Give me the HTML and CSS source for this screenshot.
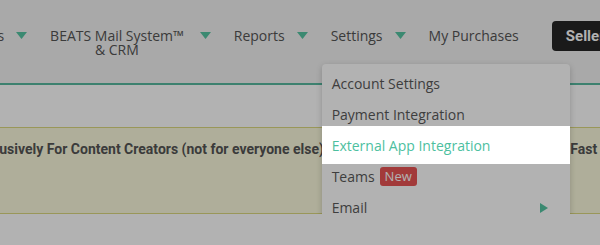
FILE: index.html
```html
<!DOCTYPE html>
<html lang="en">
<head>
<meta charset="UTF-8">
<meta name="viewport" content="width=device-width, initial-scale=1.0">
<title>Settings Tour</title>
<link rel="stylesheet" href="styles.css">
</head>
<body>
<header class="site-header">
<nav class="main-nav">
<div class="nav-item">
<span class="nav-label">Products</span>
<svg class="caret" width="11" height="7" viewBox="0 0 11 7"><path d="M0 0H11L5.5 7Z" fill="currentColor"/></svg>
</div>
<div class="nav-item">
<span class="nav-label nav-label--wrap">BEATS Mail System™<br>&amp; CRM</span>
<svg class="caret" width="11" height="7" viewBox="0 0 11 7"><path d="M0 0H11L5.5 7Z" fill="currentColor"/></svg>
</div>
<div class="nav-item">
<span class="nav-label">Reports</span>
<svg class="caret" width="11" height="7" viewBox="0 0 11 7"><path d="M0 0H11L5.5 7Z" fill="currentColor"/></svg>
</div>
<div class="nav-item nav-item--open">
<span class="nav-label">Settings</span>
<svg class="caret" width="11" height="7" viewBox="0 0 11 7"><path d="M0 0H11L5.5 7Z" fill="currentColor"/></svg>
<ul class="dropdown">
<li class="dropdown-item">Account Settings</li>
<li class="dropdown-item">Payment Integration</li>
<li class="dropdown-item dropdown-item--tour">External App Integration</li>
<li class="dropdown-item">Teams <span class="badge">New</span></li>
<li class="dropdown-item dropdown-item--sub">Email
<svg class="sub-arrow" width="8" height="10" viewBox="0 0 8 10"><path d="M0 0L8 5L0 10Z" fill="currentColor"/></svg>
</li>
</ul>
</div>
<div class="nav-item nav-item--last">
<span class="nav-label">My Purchases</span>
</div>
<button class="seller-btn">Seller Mode</button>
</nav>
</header>

<section class="notice">
<p class="notice-text">Built Exclusively For Content Creators (not for everyone else) And Built for producers who sell beats Fast &amp; Easy</p>
</section>

<div class="tour-overlay"></div>
</body>
</html>
```

FILE: styles.css
```css
body {
    margin: 0;
    background-color: #ffffff;
    font-family: "Open Sans", "Liberation Sans", sans-serif;
    overflow: hidden;
}

.site-header {
    background-color: #f2f2f2;
    height: 83px;
    border-bottom: 2px solid #58b9a0;
}

.main-nav {
    display: flex;
    align-items: flex-start;
    padding-top: 21px;
    margin-left: -54px;
    white-space: nowrap;
}

.nav-item {
    display: flex;
    align-items: flex-start;
    gap: 12px;
    padding-top: 8px;
    margin-right: 23px;
    color: #555555;
    font-size: 14px;
    line-height: 14px;
    position: relative;
}

.nav-label--wrap {
    text-align: center;
    margin-right: 4px;
}

.caret {
    color: #55c4a2;
    margin-top: 3px;
    flex-shrink: 0;
}

.nav-item--last {
    margin-right: 33px;
}

.seller-btn {
    background-color: #262626;
    color: #ffffff;
    border: none;
    border-radius: 4px;
    height: 30px;
    padding: 0 14px;
    font-family: Roboto, "Liberation Sans", sans-serif;
    font-weight: bold;
    font-size: 15px;
    white-space: nowrap;
}

/* dropdown */
.dropdown {
    position: absolute;
    top: 43px;
    left: -9px;
    width: 248px;
    margin: 0;
    padding: 4px 0;
    list-style: none;
    background-color: #ffffff;
    border-radius: 4px;
    box-shadow: 0 2px 6px rgba(0, 0, 0, 0.2);
}

.dropdown-item {
    display: flex;
    align-items: center;
    gap: 5px;
    height: 31px;
    padding: 0 10px;
    color: #5a5a5a;
    font-size: 14px;
}

.dropdown-item--tour {
    position: relative;
    z-index: 11;
    color: #4dbf9f;
}

.dropdown-item--tour::before {
    content: "";
    position: absolute;
    top: -4px;
    bottom: -3px;
    left: 0;
    right: 0;
    background-color: #ffffff;
    z-index: -1;
}

.dropdown-item--sub {
    justify-content: space-between;
    padding-right: 22px;
}

.sub-arrow {
    color: #55c4a2;
}

.badge {
    background-color: #e85454;
    color: #ffffff;
    border-radius: 3px;
    font-size: 13px;
    line-height: 19px;
    padding: 0 5px;
}

/* notice banner */
.notice {
    margin-top: 42px;
    height: 85px;
    background-color: #fbfadd;
    border-top: 1px solid #dcd980;
    border-bottom: 1px solid #dcd980;
}

.notice-text {
    margin: 0 0 0 -59px;
    padding-top: 11px;
    font-family: Roboto, "Liberation Sans", sans-serif;
    font-weight: bold;
    font-size: 14px;
    line-height: 20px;
    color: #555555;
    white-space: nowrap;
}

.tour-overlay {
    position: fixed;
    top: 0;
    left: 0;
    right: 0;
    bottom: 0;
    background-color: rgba(0, 0, 0, 0.3);
    z-index: 10;
}
```
